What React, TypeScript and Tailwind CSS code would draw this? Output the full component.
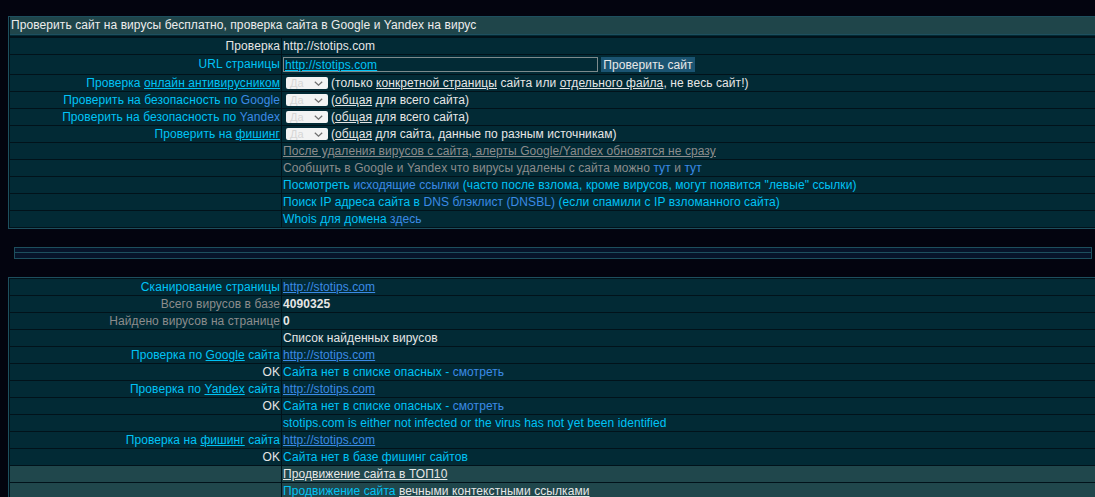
import { Fragment } from "react";
import type { ReactNode } from "react";

const cyan = "text-[#00c3f5]";
const blue = "text-[#3b8ae6]";
const white = "text-[#e6e6e6]";
const grey = "text-[#8c8c8c]";

type Row = { l?: ReactNode; r?: ReactNode; tall?: boolean; hi?: boolean };

const Select = () => (
  <span className="ml-[3px] inline-flex h-[12px] w-[42px] items-center justify-between rounded-[2px] bg-[#f3f3f3] pl-[4px] pr-[5px] text-[11px] leading-none tracking-normal text-[#d6d6d6]">
    Да
    <svg width="9" height="5" viewBox="0 0 9 5">
      <path d="M0.8 0.8l3.7 3.4 3.7-3.4" fill="none" stroke="#6e6e6e" strokeWidth="1.2" />
    </svg>
  </span>
);

const Link = () => <span className={`${blue} underline`}>http://stotips.com</span>;

const Table = ({ rows }: { rows: Row[] }) => (
  <div className="grid grid-cols-[271px_1fr] gap-px">
    {rows.map((row, i) => (
      <Fragment key={i}>
        <div
          className={`${row.tall ? "h-[19px] leading-[19px]" : "h-4 leading-4"} ${
            row.hi ? "bg-[#20474c]" : "bg-[#022a35]"
          } whitespace-nowrap pr-px text-right`}
        >
          {row.l}
        </div>
        <div
          className={`${row.tall ? "h-[19px]" : "h-4"} ${
            row.hi ? "bg-[#20474c]" : "bg-[#022a35]"
          } flex items-center whitespace-nowrap pl-px leading-4`}
        >
          {row.r}
        </div>
      </Fragment>
    ))}
  </div>
);

const topRows: Row[] = [
  { l: <span className={white}>Проверка</span>, r: <span className={white}>http://stotips.com</span> },
  {
    tall: true,
    l: <span className={cyan}>URL страницы</span>,
    r: (
      <>
        <span className="flex h-[15px] w-[315px] items-center border border-[#7d8a8c] bg-[#022a35] pl-px">
          <span className={`${cyan} underline`}>http://stotips.com</span>
        </span>
        <span className="ml-[3px] flex h-[15px] w-[94px] items-center justify-center bg-[#1b5472] text-[#e8e8e8]">
          Проверить сайт
        </span>
      </>
    ),
  },
  {
    l: (
      <span className={cyan}>
        Проверка <span className="underline">онлайн антивирусником</span>
      </span>
    ),
    r: (
      <>
        <Select />
        <span className={`${white} ml-[3px]`}>
          (только <span className="underline">конкретной страницы</span> сайта или{" "}
          <span className="underline">отдельного файла</span>, не весь сайт!)
        </span>
      </>
    ),
  },
  {
    l: (
      <span className={cyan}>
        Проверить на безопасность по <span className={blue}>Google</span>
      </span>
    ),
    r: (
      <>
        <Select />
        <span className={`${white} ml-[3px]`}>
          (<span className="underline">общая</span> для всего сайта)
        </span>
      </>
    ),
  },
  {
    l: (
      <span className={cyan}>
        Проверить на безопасность по <span className={blue}>Yandex</span>
      </span>
    ),
    r: (
      <>
        <Select />
        <span className={`${white} ml-[3px]`}>
          (<span className="underline">общая</span> для всего сайта)
        </span>
      </>
    ),
  },
  {
    l: (
      <span className={cyan}>
        Проверить на <span className="underline">фишинг</span>
      </span>
    ),
    r: (
      <>
        <Select />
        <span className={`${white} ml-[3px]`}>
          (<span className="underline">общая</span> для сайта, данные по разным источникам)
        </span>
      </>
    ),
  },
  {
    r: (
      <span className={`${grey} underline`}>
        После удаления вирусов с сайта, алерты Google/Yandex обновятся не сразу
      </span>
    ),
  },
  {
    r: (
      <span className={grey}>
        Сообщить в Google и Yandex что вирусы удалены с сайта можно <span className={blue}>тут</span> и{" "}
        <span className={blue}>тут</span>
      </span>
    ),
  },
  {
    r: (
      <span className={cyan}>
        Посмотреть <span className={blue}>исходящие ссылки</span> (часто после взлома, кроме вирусов, могут
        появится "левые" ссылки)
      </span>
    ),
  },
  {
    r: (
      <span className={cyan}>
        Поиск IP адреса сайта в <span className={blue}>DNS блэклист (DNSBL)</span> (если спамили с IP
        взломанного сайта)
      </span>
    ),
  },
  {
    r: (
      <span className={cyan}>
        Whois для домена <span className={blue}>здесь</span>
      </span>
    ),
  },
];

const ok = <span className={white}>OK</span>;

const bottomRows: Row[] = [
  { l: <span className={cyan}>Сканирование страницы</span>, r: <Link /> },
  { l: <span className={grey}>Всего вирусов в базе</span>, r: <span className={`${white} font-bold`}>4090325</span> },
  { l: <span className={grey}>Найдено вирусов на странице</span>, r: <span className={`${white} font-bold`}>0</span> },
  { r: <span className={white}>Список найденных вирусов</span> },
  {
    l: (
      <span className={cyan}>
        Проверка по <span className="underline">Google</span> сайта
      </span>
    ),
    r: <Link />,
  },
  {
    l: ok,
    r: (
      <span className={cyan}>
        Сайта нет в списке опасных - <span className={blue}>смотреть</span>
      </span>
    ),
  },
  {
    l: (
      <span className={cyan}>
        Проверка по <span className="underline">Yandex</span> сайта
      </span>
    ),
    r: <Link />,
  },
  {
    l: ok,
    r: (
      <span className={cyan}>
        Сайта нет в списке опасных - <span className={blue}>смотреть</span>
      </span>
    ),
  },
  {
    r: <span className={cyan}>stotips.com is either not infected or the virus has not yet been identified</span>,
  },
  {
    l: (
      <span className={cyan}>
        Проверка на <span className="underline">фишинг</span> сайта
      </span>
    ),
    r: <Link />,
  },
  { l: ok, r: <span className={cyan}>Сайта нет в базе фишинг сайтов</span> },
  { hi: true, r: <span className={`${white} underline`}>Продвижение сайта в ТОП10</span> },
  {
    hi: true,
    r: (
      <span className={cyan}>
        Продвижение сайта <span className={`${white} underline`}>вечными контекстными ссылками</span>
      </span>
    ),
  },
];

export default function App() {
  return (
    <div className="h-[497px] w-full overflow-hidden bg-[#03040f] font-['Liberation_Sans',Arial,sans-serif] text-[12px] tracking-[0.08px]">
      <div className="ml-2 mt-4 w-[1100px] border-y border-l border-[#1d4f5e] bg-[#01121a] pb-px pl-px">
        <div className="h-[17px] bg-[#1f454a] pl-px leading-[17px] text-[#ededed]">
          Проверить сайт на вирусы бесплатно, проверка сайта в Google и Yandex на вирус
        </div>
        <div className="h-px bg-[#1d4f5e]" />
        <div className="h-px bg-[#022a35]" />
        <div className="pt-[2px]">
          <Table rows={topRows} />
        </div>
      </div>

      <div className="ml-[14px] mt-[18px] w-[1078px] border border-[#1d4f5e] bg-[#07142a]">
        <div className="h-[4px]" />
        <div className="h-px bg-[#1d4f5e]" />
        <div className="h-[5px]" />
      </div>

      <div className="ml-2 mt-[18px] w-[1100px] border-l border-t border-[#1d4f5e] bg-[#01121a] pl-px pt-px">
        <Table rows={bottomRows} />
      </div>
    </div>
  );
}
